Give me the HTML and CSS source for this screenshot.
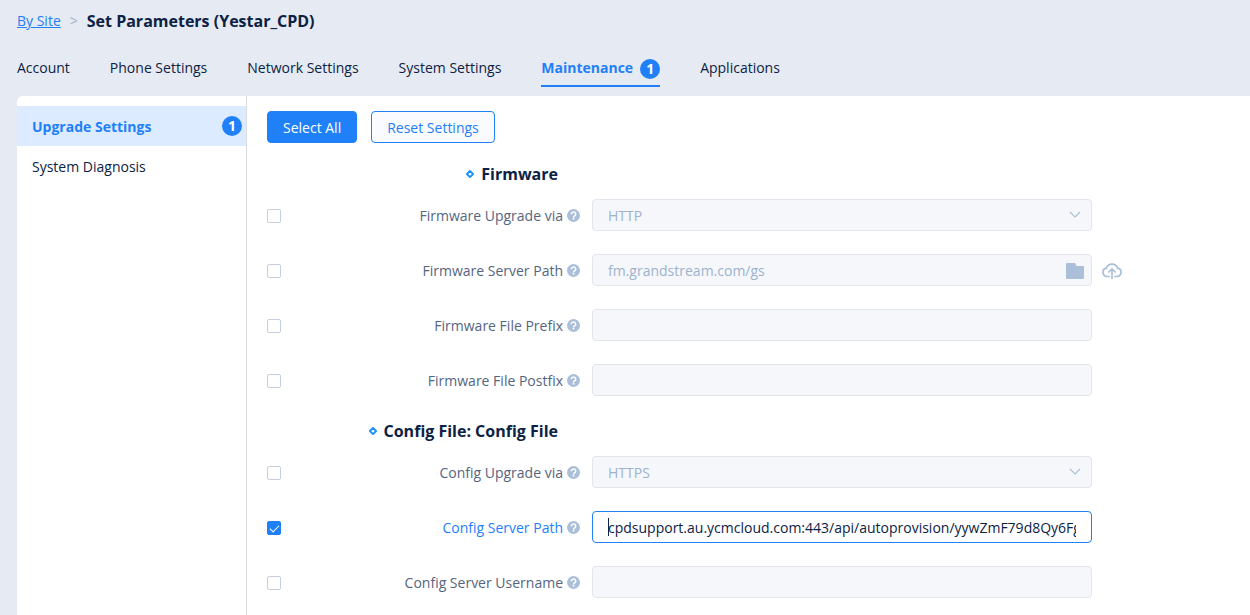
FILE: index.html
```
<!DOCTYPE html>
<html lang="en">
<head>
<meta charset="utf-8">
<title>Set Parameters</title>
<link rel="stylesheet" href="styles.css">
</head>
<body>
<svg class="sprite" aria-hidden="true">
  <symbol id="help" viewBox="0 0 13 13"><circle cx="6.500" cy="6.500" r="6.500" fill="#abc0d8"/><path d="M4.300 5.300a2.200 2.100 0 1 1 3.400 1.600c-.8.500-1.200.7-1.200 1.500" fill="none" stroke="#fff" stroke-width="1.500"/><rect x="5.700" y="9" width="1.600" height="1.500" fill="#fff"/></symbol>
  <symbol id="chevron" viewBox="0 0 12 8"><path d="M1 1 6 6 11 1" fill="none" stroke="#abc0d8" stroke-width="1.200"/></symbol>
  <symbol id="diamond" viewBox="0 0 8 8"><path d="M4 .9 7.100 4 4 7.100 .9 4Z" fill="none" stroke="#1890ff" stroke-width="1.800" stroke-linejoin="round"/></symbol>
</svg>
<header class="header">
  <nav class="breadcrumb" aria-label="Breadcrumb">
    <a class="crumb-link" href="#">By Site</a>
    <span class="crumb-sep">&gt;</span>
    <h1 class="title">Set Parameters (Yestar_CPD)</h1>
  </nav>
  <nav class="tabs" aria-label="Parameters">
    <a class="tab" href="#">Account</a>
    <a class="tab" href="#">Phone Settings</a>
    <a class="tab" href="#">Network Settings</a>
    <a class="tab" href="#">System Settings</a>
    <a class="tab tab-active" href="#" aria-current="page">Maintenance<span class="badge">1</span></a>
    <a class="tab" href="#">Applications</a>
  </nav>
</header>
<div class="panel">
  <nav class="sidebar" aria-label="Maintenance">
    <a class="side-item side-active" href="#" aria-current="page"><span class="side-text">Upgrade Settings</span><span class="badge">1</span></a>
    <a class="side-item" href="#"><span class="side-text">System Diagnosis</span></a>
  </nav>
  <main class="content">
    <div class="actions">
      <button class="button button-primary" type="button">Select All</button>
      <button class="button" type="button">Reset Settings</button>
    </div>
    <section>
      <h2 class="section-title"><svg class="diamond"><use href="#diamond"/></svg>Firmware</h2>
      <div class="row">
        <input class="check" type="checkbox" aria-label="Enable Firmware Upgrade via">
        <div class="label"><label for="fw-via">Firmware Upgrade via</label><svg class="help"><use href="#help"/></svg></div>
        <div class="field">
          <select class="control control-select" id="fw-via" disabled><option>HTTP</option></select>
          <svg class="chevron"><use href="#chevron"/></svg>
        </div>
      </div>
      <div class="row">
        <input class="check" type="checkbox" aria-label="Enable Firmware Server Path">
        <div class="label"><label for="fw-path">Firmware Server Path</label><svg class="help"><use href="#help"/></svg></div>
        <div class="field">
          <input class="control" id="fw-path" type="text" value="fm.grandstream.com/gs" disabled>
          <svg class="folder" viewBox="0 0 18 16"><path d="M1 0H9L10.500 3H17a1 1 0 0 1 1 1V15a1 1 0 0 1-1 1H1a1 1 0 0 1-1-1V1a1 1 0 0 1 1-1Z" fill="#abc0d8"/></svg>
        </div>
        <button class="upload" type="button" aria-label="Upload firmware"><svg class="cloud" viewBox="0 0 20 18"><path d="M7.800 14.500H5A4.200 4.200 0 0 1 4.300 6.200 6 6 0 0 1 15.700 6.200 4.200 4.200 0 0 1 15 14.500H12.200M10 17V7.200M6.300 10.500 10 7 13.700 10.500" fill="none" stroke="#abc0d8" stroke-width="1.700"/></svg></button>
      </div>
      <div class="row">
        <input class="check" type="checkbox" aria-label="Enable Firmware File Prefix">
        <div class="label"><label for="fw-prefix">Firmware File Prefix</label><svg class="help"><use href="#help"/></svg></div>
        <div class="field"><input class="control" id="fw-prefix" type="text" disabled></div>
      </div>
      <div class="row">
        <input class="check" type="checkbox" aria-label="Enable Firmware File Postfix">
        <div class="label"><label for="fw-postfix">Firmware File Postfix</label><svg class="help"><use href="#help"/></svg></div>
        <div class="field"><input class="control" id="fw-postfix" type="text" disabled></div>
      </div>
    </section>
    <section>
      <h2 class="section-title"><svg class="diamond"><use href="#diamond"/></svg>Config File: Config File</h2>
      <div class="row">
        <input class="check" type="checkbox" aria-label="Enable Config Upgrade via">
        <div class="label"><label for="cfg-via">Config Upgrade via</label><svg class="help"><use href="#help"/></svg></div>
        <div class="field">
          <select class="control control-select" id="cfg-via" disabled><option>HTTPS</option></select>
          <svg class="chevron"><use href="#chevron"/></svg>
        </div>
      </div>
      <div class="row">
        <input class="check" type="checkbox" aria-label="Enable Config Server Path" checked>
        <div class="label label-active"><label for="cfg-path">Config Server Path</label><svg class="help"><use href="#help"/></svg></div>
        <div class="field">
          <input class="control control-active" id="cfg-path" type="text" value="cpdsupport.au.ycmcloud.com:443/api/autoprovision/yywZmF79d8Qy6Fg">
          <span class="caret"></span>
        </div>
      </div>
      <div class="row">
        <input class="check" type="checkbox" aria-label="Enable Config Server Username">
        <div class="label"><label for="cfg-user">Config Server Username</label><svg class="help"><use href="#help"/></svg></div>
        <div class="field"><input class="control" id="cfg-user" type="text" disabled></div>
      </div>
    </section>
  </main>
</div>
</body>
</html>
```
FILE: styles.css
```
* { box-sizing: border-box; }
html { height: 100%; }
body {
  margin: 0;
  min-height: 100%;
  display: flex;
  flex-direction: column;
  padding-left: 17px;
  background: #e6eaf2;
  color: #0c2245;
  font: 14px/20px "Open Sans", sans-serif;
}
a { color: inherit; text-decoration: none; }
svg { display: block; flex: none; }
.sprite { position: absolute; width: 0; height: 0; }

.breadcrumb { display: flex; align-items: center; height: 42px; gap: 9px; }
.crumb-link { color: #1f80f7; text-decoration: underline; }
.crumb-sep { color: #9db3cd; }
.title { margin: 0; font-size: 16px; font-weight: 700; }

.tabs { display: flex; gap: 40px; height: 54px; }
.tab { display: flex; align-items: center; height: 45px; padding-top: 8px; border-bottom: 2px solid transparent; }
.tab-active { gap: 7px; color: #1f80f7; border-color: #1f80f7; font-weight: 700; }
.badge {
  width: 20px;
  height: 20px;
  border-radius: 50%;
  background: #1f80f7;
  color: #fff;
  font-weight: 700;
  text-align: center;
}
.tab .badge { margin-top: 2px; }

.panel { flex: 1; display: flex; border-top-left-radius: 6px; background: #fff; }
.sidebar { flex: none; width: 230px; padding-top: 10px; border-right: 1px solid #dadce3; }
.side-item { display: flex; align-items: center; justify-content: space-between; height: 40px; padding: 0 4px 0 15px; }
.side-text { padding-top: 2px; }
.side-active { background: #dcebff; color: #1f80f7; font-weight: 700; }

.content { flex: 1; min-width: 0; padding: 15px 20px 0; }
.actions { display: flex; gap: 14px; margin-bottom: 19px; }
.button {
  height: 32px;
  padding: 2px 15px 0;
  border: 1px solid #1f80f7;
  border-radius: 4px;
  background: #fafbfe;
  color: #1f80f7;
  font: inherit;
}
.button-primary { background: #1f80f7; color: #fff; }

.section-title {
  display: flex;
  align-items: center;
  justify-content: flex-end;
  gap: 7px;
  width: 291px;
  margin: 0 0 13px;
  font-size: 16px;
  line-height: 24px;
  font-weight: 700;
}
.diamond { width: 8px; height: 8px; }

.row {
  display: grid;
  grid-template-columns: 14px 299px minmax(0, 512px) auto;
  align-items: center;
  justify-content: start;
  margin-bottom: 23px;
}
.check {
  appearance: none;
  display: grid;
  place-items: center;
  width: 14px;
  height: 14px;
  margin: 2px 0 0;
  border: 1px solid #c3cfe0;
  border-radius: 2px;
  background: #fff;
}
.check:checked { border-color: #1f80f7; background: #1f80f7; }
.check:checked::after {
  content: "";
  width: 8px;
  height: 4px;
  margin-bottom: 2px;
  border: solid #fff;
  border-width: 0 0 1px 1px;
  transform: rotate(-45deg);
}
.label { display: flex; align-items: center; justify-content: flex-end; gap: 4px; padding-top: 1px; color: #56657f; }
.label-active { color: #1f80f7; }
.help { width: 13px; height: 13px; }
.field { position: relative; margin-left: 12px; }
.control {
  appearance: none;
  display: block;
  width: 100%;
  height: 32px;
  padding: 0 15px;
  border: 1px solid #e2e5ec;
  border-radius: 4px;
  background: #f5f7fb;
  color: #9db3cd;
  font: inherit;
  opacity: 1;
  outline: none;
}
.control-select { padding-top: 2px; }
.control-active { border-color: #1f80f7; background: #fff; color: #0c2245; }
.chevron { position: absolute; right: 11px; top: 12px; width: 12px; height: 8px; }
.folder { position: absolute; right: 8px; top: 9px; width: 18px; height: 16px; }
.caret { position: absolute; left: 16px; top: 7px; width: 1px; height: 18px; background: #0c2245; }
.upload { margin-left: 10px; padding: 2px 0 0; border: 0; background: none; }
.cloud { width: 20px; height: 18px; }
```
